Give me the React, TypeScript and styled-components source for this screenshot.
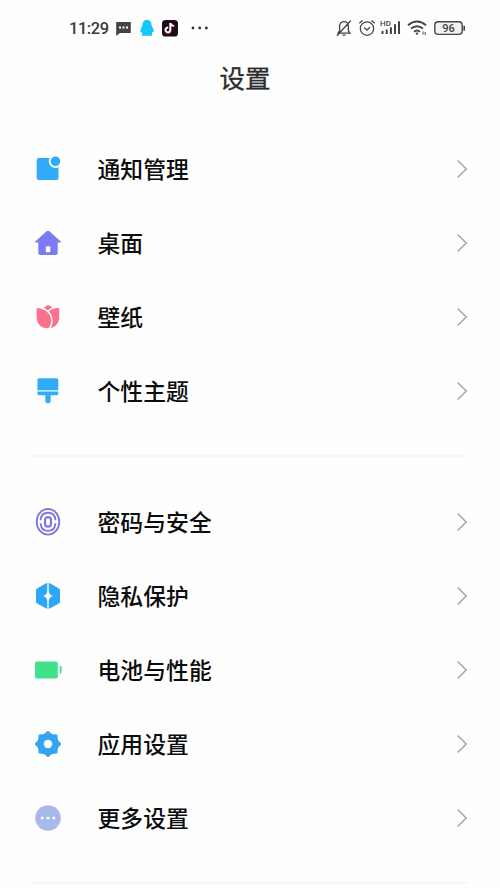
import React from "react";
import styled, { createGlobalStyle } from "styled-components";

const GlobalStyle = createGlobalStyle`
  * { box-sizing: border-box; }
  body { margin: 0; background: #fefefe; }
`;

const Screen = styled.main`
  width: 500px;
  height: 888px;
  overflow: hidden;
  background: #fefefe;
  color: #0c0c0c;
  font-family: "Noto Sans CJK SC", sans-serif;
`;

const StatusBar = styled.div`
  display: flex;
  justify-content: space-between;
  align-items: center;
  height: 56px;
  padding: 0 34px 0 69px;
`;

const StatusGroup = styled.div`
  display: flex;
  align-items: center;
`;

const Clock = styled.span`
  width: 46px;
  padding-top: 1px;
  font: 500 16.4px/21px Roboto, sans-serif;
  letter-spacing: -0.4px;
  color: #3a3a3a;
`;

const Glyph = styled.svg<{ $gap?: number }>`
  display: block;
  flex: none;
  margin-left: ${(p) => p.$gap ?? 0}px;
`;

const Title = styled.h1`
  margin: 0;
  height: 76px;
  padding-right: 10px;
  text-align: center;
  font-size: 25.5px;
  font-weight: 400;
  line-height: 42px;
  color: #2b2b2b;
  -webkit-text-stroke: 0.3px #2b2b2b;
`;

const Group = styled.ul`
  margin: 0;
  padding: 0 32px 0 34px;
  list-style: none;
`;

const Row = styled.li`
  display: flex;
  align-items: center;
  height: 74px;
`;

const Label = styled.span`
  flex: 1;
  margin-left: 35.5px;
  font-size: 22.8px;
  font-weight: 500;
  letter-spacing: 0.05px;
  line-height: 34px;
`;

const Divider = styled.hr`
  height: 2px;
  margin: 27px 32px 27.5px;
  border: 0;
  background: #f6f6f6;
`;

const Icon = ({ children }: { children: React.ReactNode }) => (
  <Glyph width="28" height="28" viewBox="0 0 28 28">
    {children}
  </Glyph>
);

const Chevron = () => (
  <Glyph width="12" height="20" viewBox="0 0 12 20" fill="none" stroke="#a6a6a6" strokeWidth="1.5">
    <path d="M1.6 1.5 10.2 10 1.6 18.5" />
  </Glyph>
);

const NotificationIcon = () => (
  <Icon>
    <rect x="2.7" y="2.9" width="21.8" height="22.2" rx="2" fill="#2fabf8" />
    <circle cx="21.4" cy="6.3" r="6.6" fill="#fefefe" />
    <circle cx="21.4" cy="6.3" r="4.8" fill="#2fabf8" />
  </Icon>
);

const HomeIcon = () => (
  <Icon>
    <path
      d="M12.7 2.2Q14 1.1 15.3 2.2L26.8 12.4Q27.5 13.4 26.3 13.5H23.7V24Q23.7 26 21.7 26H6.3Q4.3 26 4.3 24V13.5H1.7Q.5 13.4 1.2 12.4Z"
      fill="#7d7bf0"
    />
    <rect x="11.8" y="17.2" width="4.5" height="6" rx="1" fill="#fefefe" />
  </Icon>
);

const TulipIcon = () => (
  <Icon>
    <path d="M2.7 5.1C9.5 5.1 17.2 10.2 17.2 17.5 17.2 20.6 16.2 23.3 14.5 25.2 7 25.6 2.7 20.8 2.7 14Z" fill="#f9718d" />
    <path d="M14.9 8.3C17.3 6 21.5 4.9 25.2 5V14C25.2 19.4 22.2 23.8 16.4 25.1 18 22.9 18.6 20.6 18.6 17.7 18.6 13.7 17.2 10.7 14.9 8.3Z" fill="#f9718d" />
    <path d="M13.5 2.2Q14.2 1.6 14.9 2.2L18.3 4.5 13.8 7.3 9.8 4.8Z" fill="#f9718d" />
  </Icon>
);

const BrushIcon = () => (
  <Icon>
    <path d="M5 1.3H22.7Q24.3 1.3 24.3 2.9V13.2H3.4V2.9Q3.4 1.3 5 1.3Z" fill="#2fabf8" />
    <path d="M3.4 14.4H24.3V16.5Q24.3 18.2 22.6 18.2H16.7V23.6A2.7 2.7 0 0 1 11.3 23.6V18.2H5.1Q3.4 18.2 3.4 16.5Z" fill="#2fabf8" />
  </Icon>
);

const FingerprintIcon = () => (
  <Icon>
    <g fill="none" stroke="#7d79de" strokeWidth="1.9">
      <rect x="2.8" y="1" width="22.4" height="25.6" rx="11.2" ry="12.4" />
      <path d="M6.6 12.3C6.8 7.6 9.6 4.7 14 4.7S21.2 7.6 21.4 12.3M21.4 15.2C21.2 20 18.4 22.9 14 22.9S6.8 20 6.6 15.2" />
      <rect x="11" y="9.1" width="6" height="9.6" rx="3" strokeWidth="2.2" />
    </g>
  </Icon>
);

const PrivacyIcon = () => (
  <Icon>
    <path
      d="M13.3 1V9.2Q12.8 13 9 14 12.8 15 13.3 18.8V27L3.1 21.4Q2 20.7 2 19.5V8.5Q2 7.3 3.1 6.6L12 1.3Z"
      fill="#2fa6f7"
    />
    <path
      d="M14.7 1V9.2Q15.2 13 19 14 15.2 15 14.7 18.8V27L24.9 21.4Q26 20.7 26 19.5V8.5Q26 7.3 24.9 6.6L16 1.3Z"
      fill="#2fa6f7"
    />
  </Icon>
);

const BatteryIcon = () => (
  <Icon>
    <rect x="1" y="5.5" width="22.8" height="17" rx="2" fill="#3fe28b" />
    <path d="M25.7 9.9H26.3Q27.7 9.9 27.7 11.3V16.1Q27.7 17.5 26.3 17.5H25.7Z" fill="#3fe28b" />
  </Icon>
);

const GearIcon = () => (
  <Icon>
    <path
      d="M14 2 17.7 5.1 22.5 5.5 22.9 10.3 26 14 22.9 17.7 22.5 22.5 17.7 22.9 14 26 10.3 22.9 5.5 22.5 5.1 17.7 2 14 5.1 10.3 5.5 5.5 10.3 5.1Z"
      fill="#32a5f3"
      stroke="#32a5f3"
      strokeWidth="2"
      strokeLinejoin="round"
    />
    <circle cx="14" cy="14" r="4.2" fill="#fefefe" />
  </Icon>
);

const MoreIcon = () => (
  <Icon>
    <circle cx="14" cy="14" r="12.8" fill="#a6b9e9" />
    <circle cx="8.2" cy="14" r="1.5" fill="#fff" />
    <circle cx="14" cy="14" r="1.5" fill="#fff" />
    <circle cx="19.8" cy="14" r="1.5" fill="#fff" />
  </Icon>
);

const groups = [
  [
    { label: "通知管理", icon: NotificationIcon },
    { label: "桌面", icon: HomeIcon },
    { label: "壁纸", icon: TulipIcon },
    { label: "个性主题", icon: BrushIcon },
  ],
  [
    { label: "密码与安全", icon: FingerprintIcon },
    { label: "隐私保护", icon: PrivacyIcon },
    { label: "电池与性能", icon: BatteryIcon },
    { label: "应用设置", icon: GearIcon },
    { label: "更多设置", icon: MoreIcon },
  ],
];

const StatusIcons = () => (
  <StatusGroup>
    <Glyph width="16" height="18" viewBox="0 0 16 18" fill="none" stroke="#444" strokeWidth="1.3">
      <path d="M2 14.2H14L12.4 12V7.2C12.4 4.5 10.8 2.6 8 2.6S3.6 4.5 3.6 7.2V12ZM6.5 16.2H9.5M14.8 1.5 1 16.8" />
    </Glyph>
    <Glyph $gap={6} width="18" height="18" viewBox="0 0 18 18" fill="none" stroke="#444" strokeWidth="1.3">
      <circle cx="9" cy="9.6" r="6.7" />
      <path d="M1.3 4.2 4.6 1.5M16.7 4.2 13.4 1.5M6.2 8.5 9 11 12 8.2" />
    </Glyph>
    <Glyph $gap={4} width="21" height="18" viewBox="0 0 21 18" fill="#444">
      <text x="0" y="6.6" fontSize="8" fontWeight="500" fontFamily="Roboto, sans-serif" textLength="11">
        HD
      </text>
      <path d="M1.5 12H3.5V15H1.5ZM5.7 10.5H7.7V15H5.7ZM9.9 8.2H11.9V15H9.9ZM14 5.3H16V15H14ZM18 2.2H20V15H18Z" />
    </Glyph>
    <Glyph $gap={6} width="21" height="18" viewBox="0 0 21 18" fill="none" stroke="#444" strokeWidth="1.9">
      <path d="M1 6.3Q10 -1.2 19 6.3M4 9.6Q10 4.7 16 9.6M7 12.7Q10 10.2 13 12.7" />
      <circle cx="10" cy="14.6" r="1.2" fill="#444" stroke="none" />
      <path d="M16 12.5V15.5M18.2 13V16" strokeWidth="1" />
    </Glyph>
    <Glyph $gap={6} width="32" height="18" viewBox="0 0 32 18">
      <rect x="0.8" y="2.8" width="27.4" height="12.6" rx="3.4" fill="#f2f2f2" stroke="#444" strokeWidth="1.4" />
      <path d="M30.2 6.8V11.8" stroke="#444" strokeWidth="1.6" />
      <text x="14.5" y="13" textAnchor="middle" fontSize="11" fontWeight="500" fontFamily="Roboto, sans-serif" fill="#3d3d3d">
        96
      </text>
    </Glyph>
  </StatusGroup>
);

const NotificationTray = () => (
  <StatusGroup>
    <Clock>11:29</Clock>
    <Glyph width="17" height="18" viewBox="0 0 17 18">
      <path d="M1.2 3H15.8V14H5L1.2 17Z" fill="#444" />
      <path d="M4 8.5H6M7.5 8.5H9.5M11 8.5H13" stroke="#fff" strokeWidth="1.8" />
    </Glyph>
    <Glyph $gap={7} width="16" height="18" viewBox="0 0 16 18">
      <path
        d="M8 .7C11 .7 12.4 2.8 12.5 6L14.5 10.5C15.2 12.4 14.6 13.5 13.6 12.8L12.8 15.2 13.3 16.8H2.7L3.2 15.2 2.4 12.8C1.4 13.5.8 12.4 1.5 10.5L3.5 6C3.6 2.8 5 .7 8 .7Z"
        fill="#16c9f8"
      />
    </Glyph>
    <Glyph $gap={7} width="16" height="17" viewBox="0 0 16 17">
      <rect width="16" height="16.5" rx="3.6" fill="#1b0e1a" />
      <g fill="none" strokeWidth="1.8">
        <path d="M8.7 3V10.2A2.5 2.5 0 1 1 6.4 7.8M8.8 3.5Q9.8 6 12.3 6.1" stroke="#ff517b" />
        <path d="M8.2 3V10A2.4 2.4 0 1 1 6 7.5M8.3 3.5Q9.3 5.7 11.8 5.8" stroke="#fff" />
      </g>
    </Glyph>
    <Glyph $gap={13} width="18" height="4" viewBox="0 0 18 4" fill="#333">
      <circle cx="2" cy="2" r="1.4" />
      <circle cx="8.7" cy="2" r="1.4" />
      <circle cx="15.4" cy="2" r="1.4" />
    </Glyph>
  </StatusGroup>
);

export default function App() {
  return (
    <Screen>
      <GlobalStyle />
      <StatusBar>
        <NotificationTray />
        <StatusIcons />
      </StatusBar>
      <Title>设置</Title>
      {groups.map((items, index) => (
        <React.Fragment key={index}>
          <Group>
            {items.map(({ label, icon: ItemIcon }) => (
              <Row key={label}>
                <ItemIcon />
                <Label>{label}</Label>
                <Chevron />
              </Row>
            ))}
          </Group>
          <Divider />
        </React.Fragment>
      ))}
    </Screen>
  );
}
